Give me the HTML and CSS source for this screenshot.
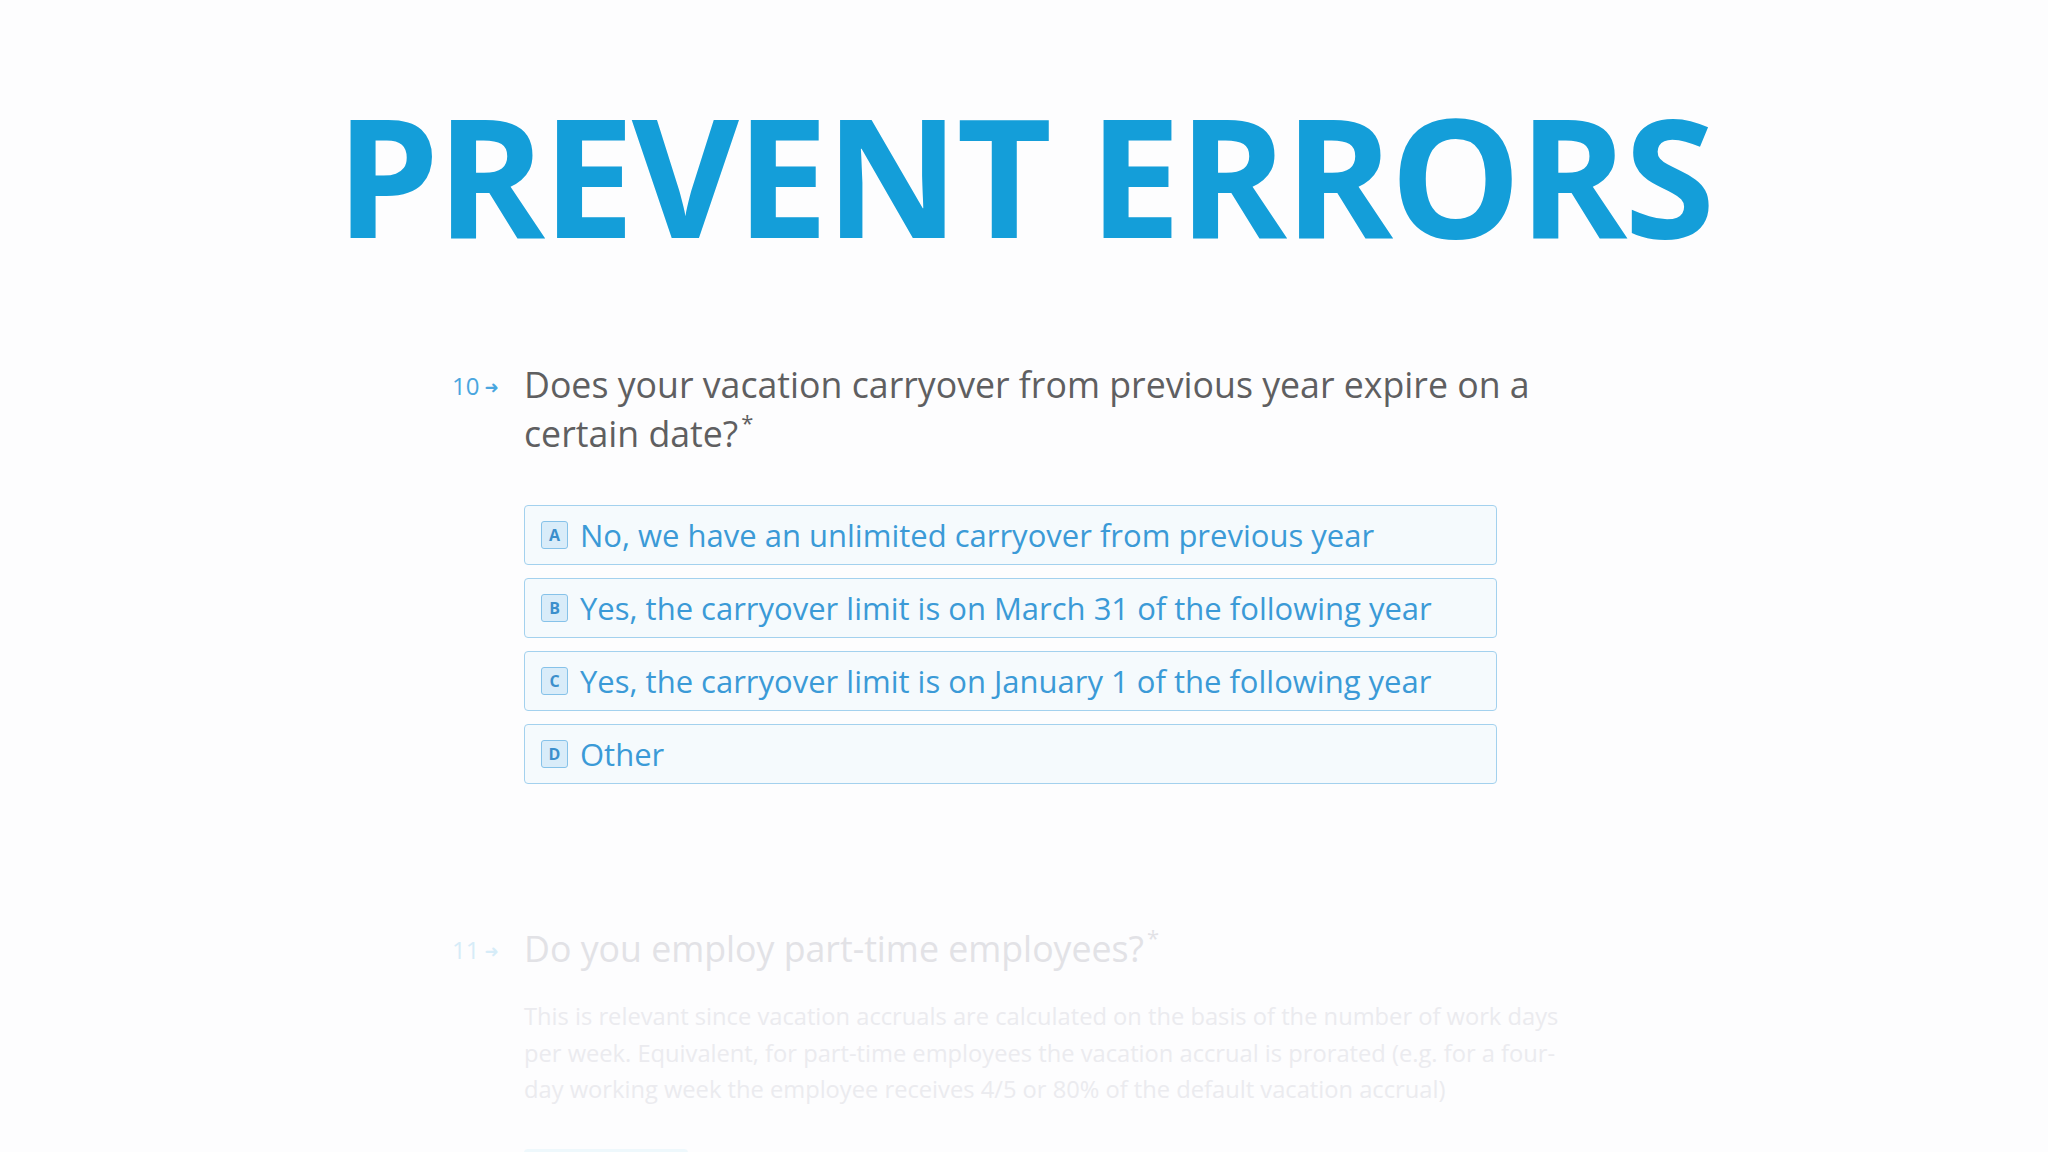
FILE: index.html
```html
<!DOCTYPE html>
<html>
<head lang="en">
    <meta charset="UTF-8">
    <title>Prevent errors</title>
    <link rel="stylesheet" href="styles.css">
</head>
<body>
<h1 class="headline">PREVENT ERRORS</h1>
<div class="form">
    <div class="question current">
        <div class="q-num">10<span class="q-arrow">&#10140;</span></div>
        <div class="q-body">
            <div class="q-title">Does your vacation carryover from previous year expire on a certain date?<sup>*</sup></div>
            <ul class="choices">
                <li><span class="key">A</span>No, we have an unlimited carryover from previous year</li>
                <li><span class="key">B</span>Yes, the carryover limit is on March 31 of the following year</li>
                <li><span class="key">C</span>Yes, the carryover limit is on January 1 of the following year</li>
                <li><span class="key">D</span>Other</li>
            </ul>
        </div>
    </div>
    <div class="question next">
        <div class="q-num">11<span class="q-arrow">&#10140;</span></div>
        <div class="q-body">
            <div class="q-title">Do you employ part-time employees?<sup>*</sup></div>
            <p class="q-desc">This is relevant since vacation accruals are calculated on the basis of the number of work days per week. Equivalent, for part-time employees the vacation accrual is prorated (e.g. for a four-day working week the employee receives 4/5 or 80% of the default vacation accrual)</p>
            <div class="q-button"></div>
        </div>
    </div>
</div>
</body>
</html>
```

FILE: styles.css
```css
*{
    margin: 0;
    padding: 0;
}
ul{
    list-style: none;
}
html, body{
    height: 100%;
    overflow: hidden;
}
body{
    background: #fdfdfe;
    font-family: "Open Sans", "Noto Sans", sans-serif;
}
.headline{
    padding-top: 92px;
    font-size: 165px;
    line-height: 1;
    font-weight: 700;
    color: #149ed9;
    text-align: center;
    letter-spacing: -3px;
}
.form{
    width: 1132px;
    margin: 103px 0 0 452px;
}
.question{
    display: flex;
    align-items: flex-start;
}
.q-num{
    width: 72px;
    flex: none;
    font-size: 24px;
    line-height: 49px;
    color: #4aa6df;
    padding-top: 1px;
}
.q-arrow{
    display: inline-block;
    font-size: 17px;
    margin-left: 5px;
    vertical-align: 2px;
    font-family: "DejaVu Sans", sans-serif;
    font-weight: 700;
}
.q-body{
    width: 1060px;
}
.q-title{
    font-size: 35.7px;
    line-height: 49px;
    color: #5f5f61;
}
.q-title sup{
    font-size: 22px;
    line-height: 0;
    vertical-align: 16px;
    margin-left: 3px;
}
.choices{
    margin-top: 47px;
    width: 973px;
}
.choices li{
    height: 58px;
    margin-bottom: 13px;
    border: 1px solid #a3d1ee;
    border-radius: 4px;
    background: #f5fafd;
    display: flex;
    align-items: center;
    padding-left: 16px;
    font-size: 31px;
    color: #3b9ad7;
}
.key{
    width: 25px;
    height: 26px;
    border: 1px solid #86c2e9;
    border-radius: 3px;
    background: #d9ecf9;
    color: #3b8fcc;
    font-size: 16px;
    font-weight: 700;
    line-height: 26px;
    text-align: center;
    margin-right: 12px;
    flex: none;
}
.next{
    margin-top: 127px;
}
.next .q-num{
    color: #d6ecf8;
}
.next .q-title{
    color: #e2e2e6;
}
.q-desc{
    margin-top: 25px;
    font-size: 23.7px;
    line-height: 36.5px;
    color: #ebebef;
}
.q-button{
    margin-top: 41px;
    width: 164px;
    height: 40px;
    border-radius: 4px;
    background: #eef8fc;
}
```
